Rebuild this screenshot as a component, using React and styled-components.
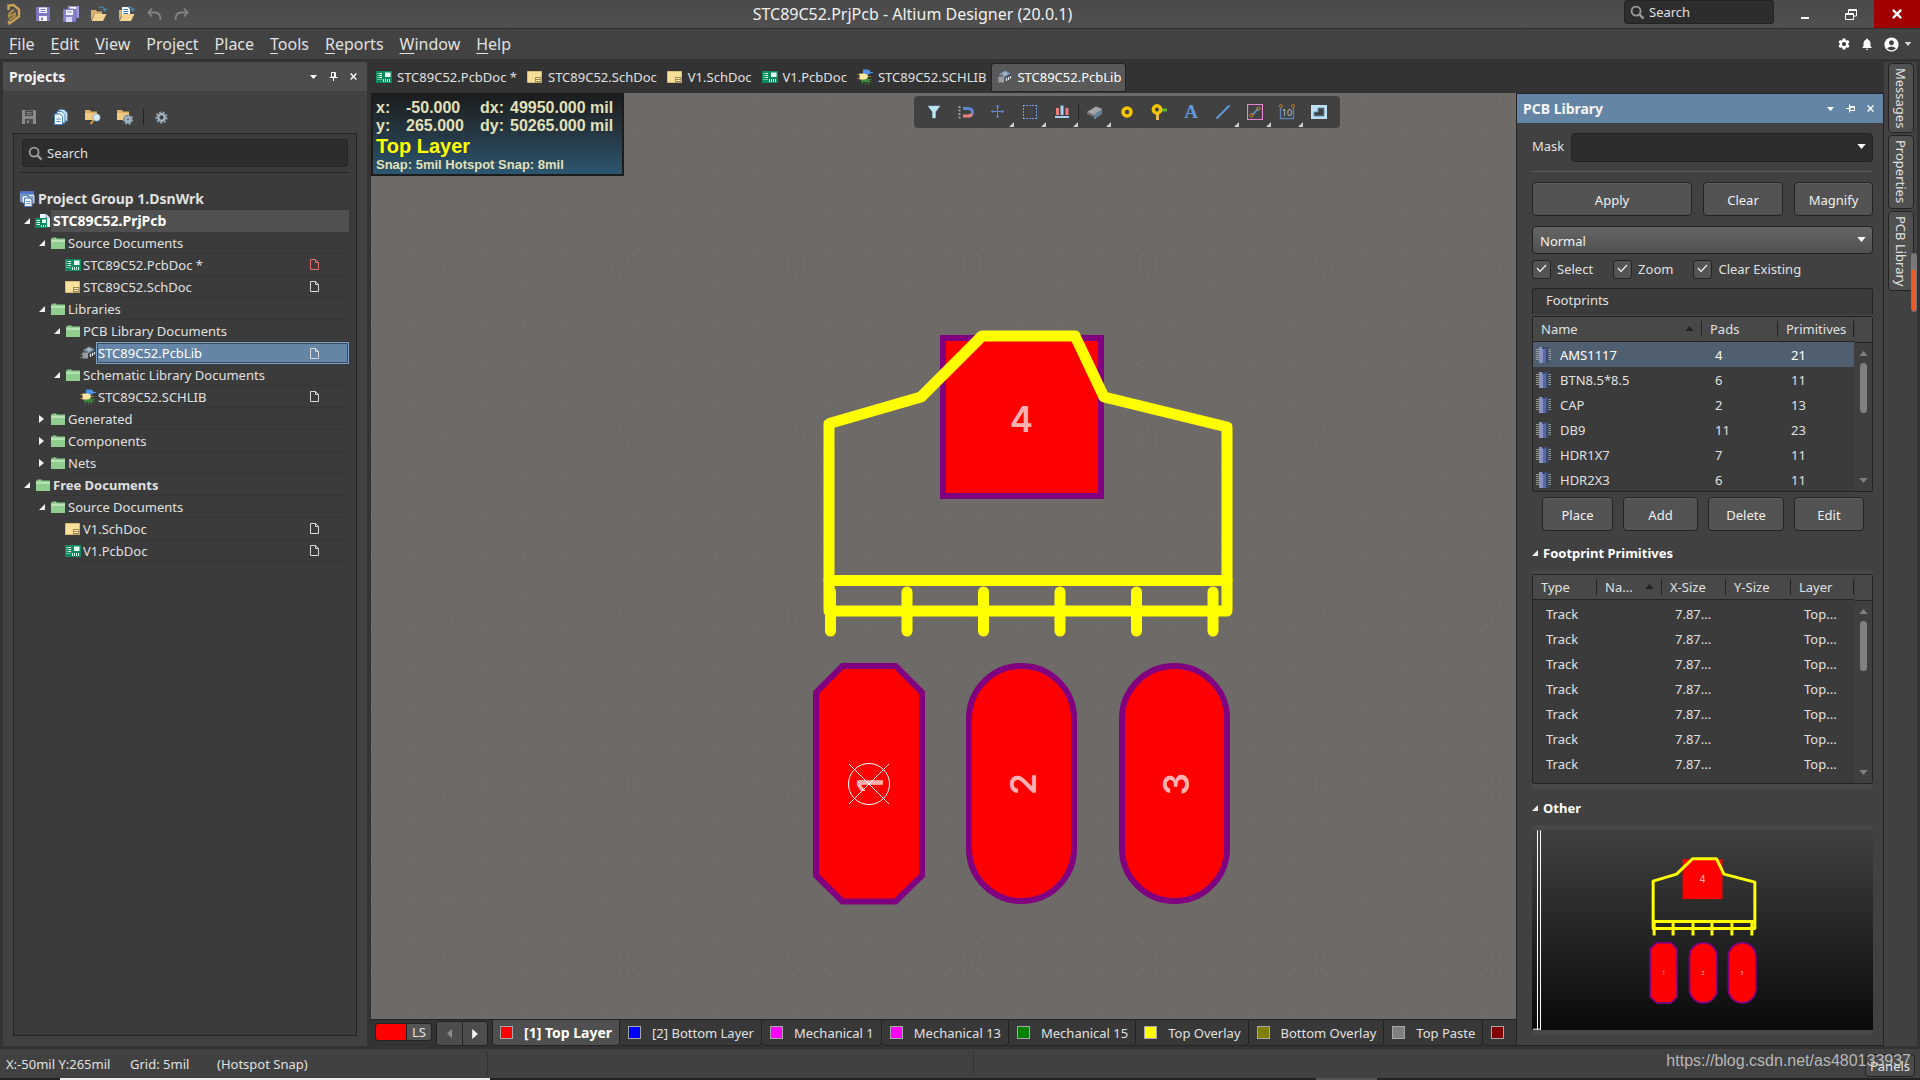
import React from 'react';
import styled, { createGlobalStyle, css } from 'styled-components';
import { MdSettings, MdNotifications, MdAccountCircle } from 'react-icons/md';

const GlobalStyle = createGlobalStyle`
  * {
    box-sizing: border-box;
  }

  body {
    margin: 0;
    background: #333333;
    color: #e0e0e0;
    font-family: "Noto Sans", "Open Sans", sans-serif;
    font-size: 13px;
    line-height: 18px;
    overflow: hidden;
  }

  button, input, select {
    margin: 0;
    padding: 0;
    border: none;
    background: none;
    color: inherit;
    font: inherit;
  }

  svg {
    display: block;
    flex: none;
  }
`;

const Window = styled.div`
  display: flex;
  flex-direction: column;
  height: 100vh;
`;

/* ---------- title bar ---------- */

const TitleBar = styled.header`
  display: grid;
  grid-template-columns: 1fr auto 1fr;
  height: 29px;
  background: linear-gradient(#4a4a4a, #505050);
  border-bottom: 1px solid #303030;
`;

const QuickAccess = styled.div`
  display: flex;
  align-items: center;
  padding-left: 5px;
  gap: 12px;
`;

const IconButton = styled.button`
  display: flex;
  align-items: center;
  justify-content: center;
`;

const Title = styled.h1`
  margin: 0;
  padding-right: 95px;
  font-size: 16px;
  font-weight: 400;
  line-height: 28px;
  color: #f0f0f0;
`;

const TitleRight = styled.div`
  display: flex;
  justify-content: flex-end;
`;

const SearchLabel = styled.label`
  display: flex;
  align-items: center;
  gap: 4px;
  width: ${(p) => p.$width || 'auto'};
  height: ${(p) => p.$height};
  margin-right: ${(p) => (p.$width ? 8 : 0)}px;
  padding-left: 5px;
  background: #2d2d2d;
  border: 1px solid #232323;
  border-radius: 3px;

  input {
    flex: 1;
    min-width: 0;
    outline: none;
  }

  input::placeholder {
    color: #e0e0e0;
    opacity: 1;
  }
`;

const WindowButton = styled.button`
  display: flex;
  align-items: center;
  justify-content: center;
  width: 46px;
  height: 28px;
  background: ${(p) => (p.$close ? '#a10000' : 'transparent')};
`;

/* ---------- menu ---------- */

const MenuBar = styled.nav`
  display: flex;
  align-items: center;
  height: 30px;
  padding: 0 8px 0 9px;
  gap: 16px;
  background: #424242;
  font-size: 16px;
  line-height: 22px;
`;

const MenuButton = styled.button`
  u {
    text-decoration-thickness: 1px;
    text-underline-offset: 3px;
  }
`;

const MenuIcons = styled.div`
  display: flex;
  align-items: center;
  gap: 9px;
  margin-left: auto;
  color: #ffffff;
`;

const AccountButton = styled(IconButton)`
  gap: 4px;
`;

/* ---------- main layout ---------- */

const Main = styled.main`
  display: flex;
  flex: 1;
  min-height: 0;
  padding: 3px;
`;

const Panel = styled.section`
  display: flex;
  flex-direction: column;
  flex: none;
  width: ${(p) => p.$width};
  background: #414141;
`;

const PanelHeader = styled.div`
  display: flex;
  align-items: center;
  gap: 12px;
  flex: none;
  height: 29px;
  padding: 0 ${(p) => (p.$active ? 9 : 10)}px 0 6px;
  background: ${(p) => (p.$active ? '#6485a5' : '#4d4d4d')};
  color: #ffffff;

  h2 {
    flex: 1;
    margin: 0;
    font-size: 14px;
    line-height: 20px;
    font-weight: 700;
    color: #f4f4f4;
  }
`;

const PanelTools = styled.div`
  display: flex;
  align-items: center;
  gap: 16px;
  height: 42px;
  padding: 10px 0 0 18px;
`;

const ToolSeparator = styled.div`
  width: 1px;
  height: 16px;
  margin: 0 ${(p) => p.$inset || 0}px;
  background: #222222;
`;

const TreeBox = styled.div`
  flex: 1;
  margin: 0 10px 10px;
  padding: 5px 7px 0 6px;
  background: #3b3b3b;
  border: 1px solid #232323;
`;

const TreeSearch = styled.div`
  padding: 0 1px 5px 2px;
  margin-bottom: 15px;
  border-bottom: 1px solid #272727;
`;

const Tree = styled.ul`
  margin: 0;
  padding: 0;
  list-style: none;
`;

const TreeRow = styled.li`
  display: flex;
  align-items: center;
  height: 22px;
  padding-left: ${(p) => p.$depth * 15}px;
  font-size: ${(p) => (p.$project ? 14 : 13)}px;
  font-weight: ${(p) => (p.$bold ? 700 : 400)};
  line-height: 20px;
`;

const TreeArrow = styled.span`
  display: flex;
  justify-content: center;
  width: 15px;
  padding-right: 2px;
`;

const TreeIcon = styled.span`
  display: flex;
  width: 16px;
`;

const TreeLabel = styled.span`
  display: flex;
  align-items: center;
  justify-content: space-between;
  flex: 1;
  height: 22px;
  padding: 0 30px 0 2px;
  border-bottom: 1px solid #353535;
  white-space: nowrap;

  ${(p) => p.$project && css`
    background: #505050;
    border-bottom-color: #505050;
    color: #ffffff;
  `}

  ${(p) => p.$selected && css`
    padding-left: 1px;
    padding-right: 29px;
    background: #6485a5;
    border: 1px solid #7fa1c4;
    box-shadow: inset 0 0 0 1px #3b4b5b;
    color: #ffffff;
  `}
`;

const Workspace = styled.div`
  display: flex;
  flex-direction: column;
  flex: 1;
  min-width: 0;
  margin-left: 4px;
`;

const DocumentTabs = styled.div`
  display: flex;
  align-items: flex-end;
  flex: none;
  height: 31px;
  padding-bottom: 1px;
`;

const DocumentTab = styled.button`
  display: flex;
  align-items: center;
  gap: 5px;
  height: 29px;
  padding: 0 4px 2px;
  border: 1px solid transparent;
  border-radius: 3px 3px 0 0;
  white-space: nowrap;

  ${(p) => p.$active && css`
    background: #595959;
    border-color: #242424;
    color: #ffffff;
  `}
`;

const WorkArea = styled.div`
  display: flex;
  flex: 1;
  min-height: 0;
`;

const EditorColumn = styled.div`
  display: flex;
  flex-direction: column;
  flex: 1;
  min-width: 0;
`;

const Editor = styled.div`
  position: relative;
  flex: 1;
  min-height: 0;
  background: #6e6a68;

  > svg {
    width: 100%;
    height: 100%;
  }
`;

const HeadsUp = styled.div`
  position: absolute;
  top: 0;
  left: 0;
  width: 253px;
  padding: 6px 3px 1px;
  border: 2px solid #1c1c1c;
  border-top: none;
  background: linear-gradient(#1b1b1b, #24343e 45%, #2c5670);
  color: #e2e0b8;
  font: bold 13px/16px "Liberation Sans", Arial, sans-serif;
`;

const Coordinates = styled.div`
  display: grid;
  grid-template-columns: 30px 74px 30px 1fr;
  font-size: 16px;
  line-height: 18px;
`;

const ActiveLayer = styled.div`
  color: #ffff00;
  font-size: 20px;
  line-height: 22px;
`;

const ActiveBar = styled.div`
  position: absolute;
  top: 3px;
  right: 176px;
  display: flex;
  align-items: center;
  height: 32px;
  padding: 0 5px 0 4px;
  background: #414141;
  border-radius: 4px;
`;

const ActiveBarButton = styled.button`
  position: relative;
  display: flex;
  align-items: center;
  justify-content: center;
  width: 32px;
  height: 32px;

  ${(p) => p.$menu && css`
    &::after {
      content: '';
      position: absolute;
      right: 0;
      bottom: 1px;
      border-left: 5px solid transparent;
      border-bottom: 5px solid #d0d0d0;
    }
  `}
`;

const LayerBar = styled.div`
  display: flex;
  align-items: stretch;
  flex: none;
  height: 27px;
  padding-left: 4px;
  border-top: 1px solid #232323;
  overflow: hidden;
`;

const LayerSet = styled.button`
  display: flex;
  align-items: center;
  flex: none;
  width: 57px;
  height: 18px;
  margin: 3px 4px 0 0;
  border: 1px solid #232323;
  border-radius: 3px;
  background: linear-gradient(90deg, #ff0000 30px, #232323 30px, #232323 31px, #555555 31px);
  padding-left: 36px;
`;

const LayerArrows = styled.div`
  display: flex;
  flex: none;
  width: 52px;
  margin: 1px 4px 0 0;
  border: 1px solid #232323;
  border-radius: 3px;
  background: #4d4d4d;

  button {
    display: flex;
    align-items: center;
    justify-content: center;
    flex: 1;
  }

  button + button {
    border-left: 1px solid #232323;
  }
`;

const LayerTab = styled.button`
  display: flex;
  align-items: center;
  gap: 11px;
  flex: none;
  padding: 0 7px;
  border: 1px solid #232323;
  border-top: none;
  border-left-color: ${(p) => (p.$active ? '#232323' : 'transparent')};
  border-radius: 0 0 4px 4px;
  background: ${(p) => (p.$active ? '#4f4f4f' : '#383838')};
  color: ${(p) => (p.$active ? '#ffffff' : '#e0e0e0')};
  font-size: ${(p) => (p.$active ? 14 : 13)}px;
  font-weight: ${(p) => (p.$active ? 700 : 400)};
`;

const Swatch = styled.span`
  width: 13px;
  height: 13px;
  border: 1px solid #a8a8a8;
  background: ${(p) => p.$color};
`;

/* ---------- library panel ---------- */

const LibraryPanel = styled(Panel)`
  border: 1px solid #232323;
`;

const LibraryBody = styled.div`
  display: flex;
  flex-direction: column;
  flex: 1;
  min-height: 0;
  padding: 10px 10px 9px 15px;
`;

const MaskRow = styled.div`
  display: flex;
  align-items: center;
  gap: 7px;
  padding-bottom: 9px;
  margin-bottom: 10px;
  border-bottom: 1px solid #5a5a5a;

  label {
    padding-bottom: 3px;
  }
`;

const SelectWrap = styled.div`
  position: relative;
  flex: 1;

  select {
    display: block;
    width: 100%;
    height: ${(p) => (p.$dark ? 29 : 28)}px;
    padding: 2px 0 0 7px;
    appearance: none;
    border: 1px solid #232323;
    border-radius: 4px;
    background: ${(p) => (p.$dark ? '#2d2d2d' : 'linear-gradient(#666666, #505050)')};
    color: #f0f0f0;
    outline: none;
  }

  svg {
    position: absolute;
    right: 7px;
    top: 11px;
    pointer-events: none;
  }
`;

const ButtonRow = styled.div`
  display: grid;
  grid-template-columns: ${(p) => p.$columns};
  gap: ${(p) => p.$gap}px;
  padding: ${(p) => p.$padding};
`;

const Button = styled.button`
  height: 34px;
  padding-top: 1px;
  border: 1px solid #232323;
  border-radius: 4px;
  background: #535353;
  box-shadow: inset 0 1px 0 #606060;
  color: #f0f0f0;
`;

const CheckRow = styled.div`
  display: flex;
  gap: 20px;
  margin: 5px 0 9px;
`;

const CheckLabel = styled.label`
  position: relative;
  display: flex;
  align-items: center;
  gap: 6px;
  height: 20px;

  input {
    width: 19px;
    height: 19px;
    appearance: none;
    border: 1px solid #232323;
    border-radius: 3px;
    background: #535353;
  }

  svg {
    position: absolute;
    left: 4px;
    top: 5px;
    pointer-events: none;
  }
`;

const GroupTitle = styled.div`
  height: 26px;
  padding: 2px 13px;
  border: 1px solid #232323;
  border-bottom: none;
  border-radius: 3px 3px 0 0;
  background: #3b3b3b;
`;

const GridFrame = styled.div`
  display: flex;
  height: ${(p) => p.$height};
  margin-top: 2px;
  border: 1px solid #232323;
  border-radius: 2px;
  background: #3b3b3b;
  overflow: hidden;
`;

const Grid = styled.table`
  flex: 1;
  table-layout: fixed;
  border-collapse: separate;
  border-spacing: 0;
  width: 100%;
  align-self: flex-start;

  th {
    position: relative;
    height: 25px;
    padding: 0 0 0 8px;
    background: #484848;
    border-bottom: 1px solid #232323;
    font-weight: 400;
    text-align: left;
  }

  th::after {
    content: '';
    position: absolute;
    top: 4px;
    right: 0;
    width: 1px;
    height: 16px;
    background: #232323;
  }

  th svg {
    position: absolute;
    right: 8px;
    top: 9px;
  }

  td {
    height: 25px;
    padding: 0 0 0 13px;
    white-space: nowrap;
  }

  ${(p) => p.$spaced && css`
    tbody::before {
      content: '';
      display: block;
      height: 1px;
    }
  `}
`;

const GridRow = styled.tr`
  background: ${(p) => (p.$selected ? '#505f70' : 'transparent')};
  color: ${(p) => (p.$selected ? '#ffffff' : '#e0e0e0')};
`;

const NameCell = styled.span`
  display: flex;
  align-items: center;
  gap: 8px;
  margin-left: -10px;
`;

const ScrollBar = styled.div`
  display: flex;
  flex-direction: column;
  align-items: center;
  flex: none;
  width: 18px;
  padding-bottom: 8px;
  border-left: 1px solid #3f3f3f;
  background: #3f3f3f;

  &::before {
    content: '';
    align-self: stretch;
    flex: none;
    height: 25px;
    margin-bottom: 8px;
    background: #484848;
    border-bottom: 1px solid #232323;
  }

  svg:last-child {
    margin-top: auto;
  }
`;

const ScrollThumb = styled.div`
  width: 7px;
  height: 50px;
  margin-top: 7px;
  border-radius: 4px;
  background: #808080;
`;

const SectionTitle = styled.h3`
  display: flex;
  align-items: center;
  gap: 5px;
  margin: ${(p) => p.$margin};
  color: #ffffff;
  font-size: 13px;
  line-height: 18px;
  font-weight: 700;
`;

const Frame = styled.div`
  padding: ${(p) => p.$padding};
  border-radius: 3px;
  background: #484848;
`;

const Preview = styled.div`
  height: 200px;
  background: linear-gradient(#404040, #0a0a0a);

  svg {
    width: 100%;
    height: 100%;
  }
`;

/* ---------- right rail and status bar ---------- */

const Rail = styled.aside`
  position: relative;
  display: flex;
  flex-direction: column;
  align-items: flex-start;
  gap: 2px;
  flex: none;
  width: 33px;
  padding: 1px 4px;
  background: #414141;
`;

const RailButton = styled.button`
  width: 26px;
  padding: 4px 0;
  border: 1px solid #232323;
  border-radius: 4px;
  background: #505050;
  writing-mode: vertical-rl;
  line-height: 24px;
  white-space: nowrap;
`;

const RailMarker = styled.div`
  position: absolute;
  right: 0;
  top: 191px;
  width: 6px;
  height: 59px;
  border: 1px solid #7a7a7a;
  border-radius: 3px;
  background: linear-gradient(#7a7a7a 16px, #f15a24 16px);
`;

const StatusBar = styled.footer`
  position: relative;
  display: flex;
  align-items: center;
  flex: none;
  height: 29px;
  padding: 0 5px 0 6px;
  background: #414141;
`;

const StatusGroup = styled.div`
  display: flex;
  align-items: center;
  width: ${(p) => p.$width};
  height: 23px;
  border-right: 1px solid #333333;
`;

const StatusText = styled.span`
  width: ${(p) => p.$width};
  white-space: nowrap;
`;

const PanelsButton = styled.button`
  width: 50px;
  height: 23px;
  margin: 4px 0 0 auto;
  border: 1px solid #232323;
  border-radius: 4px;
  background: #4b4b4b;
`;

const Watermark = styled.div`
  position: absolute;
  right: 9px;
  bottom: 6px;
  color: rgba(215, 215, 215, 0.8);
  font: 16px/22px "Liberation Sans", Arial, sans-serif;
  pointer-events: none;
`;

const TaskStrip = styled.div`
  flex: none;
  height: 2px;
  background: linear-gradient(90deg, #222222 60px, #f0f0f0 60px, #f0f0f0 490px, #222222 490px, #222222 1316px, #555555 1316px, #555555 1377px, #222222 1377px);
`;

/* ---------- icons ---------- */

const Icon = ({ size = 16, width, height, box = '0 0 16 16', children }) => (
  <svg width={width || size} height={height || size} viewBox={box} fill="none" aria-hidden="true">{children}</svg>
);

const LogoIcon = () => (
  <Icon width={18} height={22} box="0 0 18 22">
    <path d="M3.500 7V2.500L8.500 2L14 6.500V13.500L4.500 20.500L3.500 18" stroke="#c9a255" strokeWidth="2.400" />
    <path d="M9 6.500L4 11V13.500L10 10.500V13L4 17" stroke="#b8924a" strokeWidth="1.800" />
  </Icon>
);

const SaveIcon = ({ body = '#7d78c0', light = '#f4f4ff' }) => (
  <Icon>
    <path d="M1 1H14L15 2V15H1Z" fill={body} />
    <path d="M4 1.500H12V7H4Z" fill={light} />
    <path d="M5.500 3.500H10.500M5.500 5.500H10.500" stroke={body} />
    <path d="M4 10H12V15H4Z" fill={light} />
    <path d="M6 11.500H8V14H6Z" fill={body} />
  </Icon>
);

const SaveAllIcon = () => (
  <Icon>
    <path d="M5 0H16V12H5Z" fill="#9c97d6" />
    <path d="M7 1H13V3H7Z" fill="#ffffff" />
    <path d="M0 3H11L13 4V16H0Z" fill="#8883cb" stroke="#5d58a3" strokeWidth="0.600" />
    <path d="M3 4H10V9H3Z" fill="#f4f4ff" />
    <path d="M4 6H9" stroke="#8883cb" />
    <path d="M3 11H9V16H3Z" fill="#d9d7f5" />
  </Icon>
);

const OpenIcon = ({ doc }) => (
  <Icon>
    <path d="M8 2C11 0 13 1 14 4M12 3L14 5L15.500 2.500" stroke="#4b84a8" strokeWidth="1.300" />
    <path d="M0 4H5L6 5.500H11V8H4L0 14Z" fill="#d8b070" />
    {doc && <path d="M3 1H9L11 3V10H3Z" fill="#eef4fa" />}
    {doc && <path d="M4.500 3.500H9M4.500 5.500H9M4.500 7.500H9" stroke="#3f7da8" />}
    <path d="M4 8H15.500L12 15H0.500Z" fill="#f5d391" />
  </Icon>
);

const ArrowBackIcon = ({ flip }) => (
  <Icon width={15} height={13} box="0 0 15 13">
    <g transform={flip ? 'translate(15 0) scale(-1 1)' : undefined} stroke="#828282" strokeWidth="1.800">
      <path d="M2 4.500H8C12 4.500 13.500 8 13.500 12" />
      <path d="M5 0.500L1.500 4.500L5 8.500" />
    </g>
  </Icon>
);

const SearchIcon = () => (
  <Icon size={15}>
    <circle cx="6.500" cy="6.500" r="4.800" stroke="#999999" strokeWidth="2" />
    <path d="M10 10L14.500 14.500" stroke="#999999" strokeWidth="2.600" />
  </Icon>
);

const CaretIcon = ({ width = 9, height = 5, color = '#ffffff' }) => (
  <Icon width={width} height={height} box="0 0 10 6"><path d="M0 0H10L5 6Z" fill={color} /></Icon>
);

const CaretUpIcon = ({ color = '#808080' }) => (
  <Icon width={9} height={5} box="0 0 10 6"><path d="M0 6H10L5 0Z" fill={color} /></Icon>
);

const PinIcon = ({ side }) => (
  <Icon width={9} height={9} box="0 0 9 9">
    <g transform={side ? 'rotate(-90 4.500 4.500) scale(1 -1) translate(0 -9)' : undefined}>
      <path d="M2.500 0.500H6.500V5H2.500Z" stroke="#ffffff" />
      <path d="M5.500 0V5M0.500 5.500H8.500M4.500 6V9" stroke="#ffffff" />
    </g>
  </Icon>
);

const CloseIcon = ({ size = 7, stroke = 1.6 }) => (
  <Icon size={size} box="0 0 8 8"><path d="M0.700 0.700L7.300 7.300M7.300 0.700L0.700 7.300" stroke="#ffffff" strokeWidth={stroke} /></Icon>
);

const ExpandedIcon = () => (
  <Icon size={6} box="0 0 6 6"><path d="M6 0V6H0Z" fill="#f0f0f0" /></Icon>
);

const CollapsedIcon = () => (
  <Icon width={5} height={8} box="0 0 5 8"><path d="M0 0L5 4L0 8Z" fill="#f0f0f0" /></Icon>
);

const FolderIcon = () => (
  <Icon width={15} height={12} box="-1 0 15 12">
    <path d="M0 1.500H1.500V0.500H5.500V1.500H14V12H0Z" fill="#8fce8f" />
    <path d="M0 3H14V5H0Z" fill="#b7e2b4" />
  </Icon>
);

const PcbDocIcon = () => (
  <Icon height={12} width={16} box="0 0 16 12">
    <path d="M0 0H16V12H0Z" fill="#0f8a5c" />
    <path d="M1.500 2.500H6M1.500 4.500H6M1.500 6.500H6M1.500 8.500H6" stroke="#c8f0de" strokeDasharray="1 1" />
    <path d="M3.500 2.500H6M3.500 4.500H6M3.500 6.500H6" stroke="#e8fff4" />
    <path d="M9 1.500H14.500V6H9Z" fill="#e4fff2" />
    <path d="M7.500 8V11M9.500 8V11M11.500 8V11M13.500 8V11" stroke="#c8f0de" />
  </Icon>
);

const SchDocIcon = () => (
  <Icon height={12} width={16} box="0 0 16 12">
    <path d="M0.500 0.500H14.500V11.500H0.500Z" fill="#f8e09a" stroke="#d8bb74" />
    <path d="M8 6H14.500V11.500H8Z" fill="#a08a52" />
    <path d="M9 7.500H13.500M9 9.500H13.500" stroke="#fbe9b4" />
  </Icon>
);

const PcbLibIcon = () => (
  <Icon>
    <path d="M3 5L9 1.500L15 4.500L9 8.500Z" fill="#7a90a8" />
    <path d="M6 4.500L9 3L12 4.500L9 6.500Z" fill="#a9bccd" />
    <path d="M9 8.500L15 4.500V7L9 11Z" fill="#3d4c5c" />
    <path d="M10.500 9V12M12.500 8V11M14.500 7V9.500" stroke="#e4e9ee" strokeWidth="1.200" />
    <path d="M2.500 7.500H8V13.500H2.500Z" fill="#9a9fa5" />
    <path d="M0.500 9.500H3M0 12.500H3M4 6V8M6 5.500V8" stroke="#6d7277" />
  </Icon>
);

const SchLibIcon = () => (
  <Icon>
    <path d="M6 0.500H10C12.500 0.500 13.500 2 13.500 3H16V4H13.500C12.500 5.500 11 6 9 6H6Z" fill="#4f90e8" />
    <path d="M4 9.500H12.500V13H4Z" fill="#388a3a" />
    <path d="M5.500 13V15.500M8.500 13V15.500M11.500 13V15.500M12 10.500H14.500M12 12.500H14.500" stroke="#388a3a" strokeWidth="0.800" />
    <path d="M0 5.500H3M0 9.500H3M11 7.500H14" stroke="#a8762a" strokeWidth="0.900" />
    <path d="M2.500 4.500H7C9.500 4.500 11 6 11 7.500C11 9 9.500 10.500 7 10.500H2.500Z" fill="#ffe7a0" />
  </Icon>
);

const GroupIcon = () => (
  <Icon>
    <path d="M0 0.500H14V11H0Z" fill="#7f9fd0" />
    <path d="M0 0.500H14V3H0Z" fill="#4d78c8" />
    <path d="M2 4.500H8V12H2Z" fill="#e8eef8" stroke="#5577a8" />
    <path d="M4.500 7H10L12 9V15.500H4.500Z" fill="#e8eef8" stroke="#5577a8" />
    <path d="M9 4.500H14V12H12.500" stroke="#dfe7f4" />
    <path d="M6 10.500H10.500M6 12.500H10.500" stroke="#7b9ac5" />
  </Icon>
);

const ProjectIcon = () => (
  <Icon>
    <path d="M5 1H11L15 4.500V14H5Z" fill="#eef2fb" />
    <path d="M11 1V4.500H15" stroke="#9aa5c5" />
    <path d="M0 5H12V15H0Z" fill="#0f8a5c" />
    <path d="M1.500 7.500H5M1.500 9.500H5M1.500 11.500H5" stroke="#e0fff0" />
    <path d="M7 6.500H11V10H7Z" fill="#e4fff2" />
    <path d="M6.500 12V14M8.500 12V14M10.500 12V14" stroke="#c8f0de" />
  </Icon>
);

const PageIcon = ({ modified }) => (
  <Icon width={9} height={11} box="0 0 9 11">
    <path d="M0.500 0.500H5.500L8.500 3.500V10.500H0.500ZM5.500 0.500V3.500H8.500" stroke={modified ? '#e86a6a' : '#d8d8d8'} />
  </Icon>
);

const CopyDocsIcon = () => (
  <Icon>
    <path d="M6 0.500H11L14.500 4V12H6Z" fill="#cfe2f5" stroke="#4c86c0" />
    <path d="M4 2.500H9L12 5.500V14H4Z" fill="#dcebf9" stroke="#4c86c0" />
    <path d="M1.500 5H7L9.500 7.500V15.500H1.500Z" fill="#f4f9ff" stroke="#4c86c0" />
    <path d="M3.500 10H7.500M3.500 12.500H7.500" stroke="#4c86c0" />
  </Icon>
);

const GearShape = ({ x = 8, y = 8, r = 4.5 }) => (
  <g>
    <circle cx={x} cy={y} r={r + 1} stroke="#8fa3b2" strokeWidth="2" strokeDasharray="2.200 1.600" />
    <circle cx={x} cy={y} r={r - 1} stroke="#a5b6c2" strokeWidth="2.400" />
  </g>
);

const FolderToolIcon = ({ kind }) => (
  <Icon>
    <path d="M0 1H5L6 2.500H12V11H0Z" fill="#dcae66" />
    <path d="M0 4H12V11H0Z" fill="#f2c983" />
    {kind === 'search' ? (
      <g>
        <circle cx="11.500" cy="8.500" r="3.600" fill="#d7ecf7" stroke="#8fb4c9" />
        <path d="M8.500 11.500L5.500 15" stroke="#c99a4a" strokeWidth="2" />
      </g>
    ) : (
      <g><circle cx="11" cy="10.500" r="4.500" fill="#50606c" /><GearShape x={11} y={10.5} r={3.3} /></g>
    )}
  </Icon>
);

const FootprintIcon = () => (
  <Icon>
    <path d="M0 2.500H15M0 4.500H15M0 6.500H15M0 8.500H15M0 10.500H15M0 12.500H15" stroke="#a9b0a8" strokeWidth="0.800" />
    <path d="M3 0H12V16H3Z" fill="#5a6a9c" />
    <path d="M3 0H7V16H3Z" fill="#8a8fc4" />
    <path d="M10 0H12.500V16H10Z" fill="#384a72" />
    <path d="M6 0H9.500C9.500 2.500 6 2.500 6 0Z" fill="#2e3d60" />
  </Icon>
);

const tools = [
  { name: 'Filter', icon: <path d="M2 2H14L9.500 8V14H6.500V8Z" fill="#bfe6f2" stroke="#8cc3d8" strokeWidth="0.600" /> },
  {
    name: 'Snapping',
    icon: (
      <g>
        <path d="M1.500 2V15" stroke="#9aa0a4" strokeWidth="2" strokeDasharray="2 1.500" />
        <path d="M5 4.500H10C16 4.500 16 12 10 12" stroke="#5d86d8" strokeWidth="3" />
        <path d="M5 12H10C11.500 12 13 11.500 13.700 10" stroke="#ee7d7d" strokeWidth="3" />
      </g>
    ),
  },
  { name: 'Move', menu: true, icon: <path d="M7.500 2V13M2 7.500H13M7.500 1L6.500 3H8.500ZM7.500 14L6.500 12H8.500ZM1 7.500L3 6.500V8.500ZM14 7.500L12 6.500V8.500Z" stroke="#6486c4" /> },
  { name: 'Select area', menu: true, icon: <path d="M1 1.500H15M1 14.500H15M1.500 1V15M14.500 1V15" stroke="#6f97e8" strokeDasharray="2 1" /> },
  {
    name: 'Align',
    menu: true,
    icon: (
      <g>
        <path d="M2 4H5V11H2ZM11.500 4H14.500V11H11.500Z" fill="#ee7d7d" />
        <path d="M6.500 1.500H9.500V11H6.500Z" fill="#a9cfee" />
        <path d="M1 13H15" stroke="#a9cfee" strokeWidth="2" />
      </g>
    ),
  },
  {
    name: 'Place component',
    menu: true,
    icon: (
      <g>
        <path d="M0 8L9 2.500L15.500 5L7 11Z" fill="#a5a5a5" />
        <path d="M0 8L7 11V13L0 10Z" fill="#777777" />
        <path d="M8 10V15M10 9V13.500M12 7.500V12M14 6V10.500" stroke="#7fa7c4" strokeWidth="1.300" />
      </g>
    ),
  },
  { name: 'Place pad', icon: <circle cx="8" cy="8" r="4" stroke="#f4c400" strokeWidth="3.600" /> },
  {
    name: 'Place via',
    icon: (
      <g>
        <path d="M6.500 9V16" stroke="#e8b85a" strokeWidth="3" />
        <path d="M10 6H16" stroke="#5cb82e" strokeWidth="3" />
        <circle cx="6" cy="5.500" r="3.700" stroke="#f4c400" strokeWidth="3.400" />
      </g>
    ),
  },
  { name: 'Place string', glyph: true },
  { name: 'Place line', menu: true, icon: <path d="M1.500 14.500L14.500 1.500" stroke="#5f98dc" strokeWidth="2" /> },
  {
    name: 'Place room',
    menu: true,
    icon: (
      <g>
        <path d="M0.500 0.500H15.500V15.500H0.500Z" stroke="#e584d6" strokeWidth="1.200" />
        <path d="M5 11L11 5" stroke="#5f86b8" strokeWidth="2" />
        <circle cx="4.500" cy="11.500" r="1.600" stroke="#c88a28" />
        <circle cx="11.500" cy="4.500" r="1.600" stroke="#c88a28" />
      </g>
    ),
  },
  {
    name: 'Place dimension',
    menu: true,
    icon: (
      <g>
        <path d="M1.500 4V14.500H14.500V4" stroke="#5f7fb0" strokeWidth="1.400" />
        <circle cx="2" cy="2" r="1.500" stroke="#b07a28" />
        <circle cx="14" cy="2" r="1.500" stroke="#b07a28" />
        <text x="8" y="12" textAnchor="middle" fontSize="9" fill="#c0c0c0">10</text>
      </g>
    ),
  },
  {
    name: 'Place region',
    icon: (
      <g>
        <path d="M0 1H16V15H0Z" fill="#bfe0f2" />
        <path d="M7 4H13V12H3V8H7Z" fill="#414141" stroke="#5a94b8" />
      </g>
    ),
  },
];

const BigA = styled.span`
  color: #5f98dc;
  font: bold 19px/20px "Liberation Serif", "Times New Roman", serif;
`;

/* ---------- drawings ---------- */

const BoardDrawing = () => (
  <svg viewBox="371 93 1145 926" preserveAspectRatio="xMidYMid slice" role="img" aria-label="AMS1117 footprint">
    <defs>
      <pattern id="minor" x="830" y="363" width="7.650" height="7.650" patternUnits="userSpaceOnUse">
        <rect width="1" height="1" fill="#656260" />
      </pattern>
      <pattern id="major" x="830" y="363" width="38.250" height="38.250" patternUnits="userSpaceOnUse">
        <rect width="1" height="1" fill="#8b8785" />
      </pattern>
    </defs>
    <rect x="0" y="0" width="1920" height="1080" fill="url(#minor)" />
    <rect x="0" y="0" width="1920" height="1080" fill="url(#major)" />
    <g fill="#ff0000" stroke="#800080" strokeWidth="6">
      <rect x="943" y="338" width="158" height="158" />
      <path d="M842.500 666H895.500L922 692.500V875.500L895.500 901.500H842.500L816 875.500V692.500Z" />
      <rect x="969" y="666" width="105" height="235" rx="52.500" />
      <rect x="1122" y="666" width="105" height="235" rx="52.500" />
    </g>
    <g stroke="#ffff00" strokeWidth="11" strokeLinecap="round" strokeLinejoin="round" fill="none">
      <path d="M829 611V424L831 423L921 397L982 336H1075L1104 397L1227 427V611Z" />
      <path d="M829 580.500H1227" />
      <path d="M830.500 592V631M907 592V631M983.500 592V631M1060 592V631M1136.500 592V631M1213 592V631" />
    </g>
    <g fill="#ffb0b0" fontFamily="Inter" fontWeight="600" fontSize="35" textAnchor="middle">
      <text x="1021.500" y="432">4</text>
      <text transform="translate(882.500 785) rotate(-90)">1</text>
      <text transform="translate(1035.500 784) rotate(-90)">2</text>
      <text transform="translate(1188.500 784) rotate(-90)">3</text>
    </g>
    <g stroke="#ffffff" fill="none">
      <circle cx="869" cy="784" r="20.500" />
      <path d="M849 764L889 804M889 764L849 804" />
    </g>
  </svg>
);

const PreviewDrawing = () => (
  <svg viewBox="1532 830 342 200" role="img" aria-label="Footprint preview">
    <path d="M1537.500 830V1030M1540.500 830V1030M1533 1029.500H1541" stroke="#ffffff" />
    <rect x="1683" y="859" width="40" height="40" fill="#ff0000" />
    <g fill="#ff0000" stroke="#800080" strokeWidth="1.800">
      <path d="M1657 943H1671.500L1677.500 949V997L1671.500 1003H1657L1650.500 997V949Z" />
      <rect x="1690" y="943" width="27.500" height="60" rx="13.700" />
      <rect x="1729" y="943" width="27.500" height="60" rx="13.700" />
    </g>
    <g stroke="#ffff00" strokeWidth="3" strokeLinejoin="round" fill="none">
      <path d="M1653.500 928.500V881L1677 874L1693 858.500H1717L1724.500 874L1755.500 882V928.500ZM1653.500 921.500H1755.500" />
      <path d="M1654.500 923V935.500M1673.500 923V935.500M1693.500 923V935.500M1712.500 923V935.500M1732.500 923V935.500M1752.500 923V935.500" />
    </g>
    <g fill="#ffb0b0" fontFamily="Inter" textAnchor="middle" fontSize="5">
      <text x="1703" y="882.500" fontSize="10">4</text>
      <text x="1664" y="975">1</text>
      <text x="1703.500" y="975">2</text>
      <text x="1742.500" y="975">3</text>
    </g>
  </svg>
);

/* ---------- data ---------- */

const menus = [
  ['', 'F', 'ile'], ['', 'E', 'dit'], ['', 'V', 'iew'], ['Proje', 'c', 't'], ['', 'P', 'lace'],
  ['', 'T', 'ools'], ['', 'R', 'eports'], ['', 'W', 'indow'], ['', 'H', 'elp'],
];

const treeRows = [
  { depth: 0, label: 'STC89C52.PrjPcb', icon: <ProjectIcon />, open: true, bold: true, project: true },
  { depth: 1, label: 'Source Documents', icon: <FolderIcon />, open: true },
  { depth: 2, label: 'STC89C52.PcbDoc *', icon: <PcbDocIcon />, page: true, modified: true },
  { depth: 2, label: 'STC89C52.SchDoc', icon: <SchDocIcon />, page: true },
  { depth: 1, label: 'Libraries', icon: <FolderIcon />, open: true },
  { depth: 2, label: 'PCB Library Documents', icon: <FolderIcon />, open: true },
  { depth: 3, label: 'STC89C52.PcbLib', icon: <PcbLibIcon />, page: true, selected: true },
  { depth: 2, label: 'Schematic Library Documents', icon: <FolderIcon />, open: true },
  { depth: 3, label: 'STC89C52.SCHLIB', icon: <SchLibIcon />, page: true },
  { depth: 1, label: 'Generated', icon: <FolderIcon />, open: false },
  { depth: 1, label: 'Components', icon: <FolderIcon />, open: false },
  { depth: 1, label: 'Nets', icon: <FolderIcon />, open: false },
  { depth: 0, label: 'Free Documents', icon: <FolderIcon />, open: true, bold: true },
  { depth: 1, label: 'Source Documents', icon: <FolderIcon />, open: true },
  { depth: 2, label: 'V1.SchDoc', icon: <SchDocIcon />, page: true },
  { depth: 2, label: 'V1.PcbDoc', icon: <PcbDocIcon />, page: true },
];

const documents = [
  { label: 'STC89C52.PcbDoc *', icon: <PcbDocIcon /> },
  { label: 'STC89C52.SchDoc', icon: <SchDocIcon /> },
  { label: 'V1.SchDoc', icon: <SchDocIcon /> },
  { label: 'V1.PcbDoc', icon: <PcbDocIcon /> },
  { label: 'STC89C52.SCHLIB', icon: <SchLibIcon /> },
  { label: 'STC89C52.PcbLib', icon: <PcbLibIcon />, active: true },
];

const layers = [
  { label: '[1] Top Layer', color: '#ff0000', active: true },
  { label: '[2] Bottom Layer', color: '#0000ff' },
  { label: 'Mechanical 1', color: '#ff00ff' },
  { label: 'Mechanical 13', color: '#ff00ff' },
  { label: 'Mechanical 15', color: '#008000' },
  { label: 'Top Overlay', color: '#ffff00' },
  { label: 'Bottom Overlay', color: '#808000' },
  { label: 'Top Paste', color: '#808080' },
  { label: 'Bottom Paste', color: '#800000' },
];

const footprints = [
  ['AMS1117', 4, 21],
  ['BTN8.5*8.5', 6, 11],
  ['CAP', 2, 13],
  ['DB9', 11, 23],
  ['HDR1X7', 7, 11],
  ['HDR2X3', 6, 11],
];

const tracks = [1, 2, 3, 4, 5, 6, 7];

/* ---------- parts ---------- */

const Scroller = () => (
  <ScrollBar>
    <CaretUpIcon />
    <ScrollThumb />
    <CaretIcon color="#808080" />
  </ScrollBar>
);

const ProjectsPanel = () => (
  <Panel $width="364px">
    <PanelHeader>
      <h2>Projects</h2>
      <IconButton aria-label="Menu"><CaretIcon width={7} height={6} /></IconButton>
      <IconButton aria-label="Pin"><PinIcon /></IconButton>
      <IconButton aria-label="Close"><CloseIcon /></IconButton>
    </PanelHeader>
    <PanelTools>
      <IconButton aria-label="Save"><SaveIcon body="#8a8a8a" light="#4a4a4a" /></IconButton>
      <IconButton aria-label="Compile"><CopyDocsIcon /></IconButton>
      <IconButton aria-label="Explore"><FolderToolIcon kind="search" /></IconButton>
      <IconButton aria-label="Project options"><FolderToolIcon kind="gear" /></IconButton>
      <ToolSeparator $inset={-6} />
      <IconButton aria-label="Settings"><Icon size={15}><GearShape /></Icon></IconButton>
    </PanelTools>
    <TreeBox>
      <TreeSearch>
        <SearchLabel $height="28px">
          <SearchIcon />
          <input type="text" placeholder="Search" aria-label="Search projects" />
        </SearchLabel>
      </TreeSearch>
      <Tree>
        <TreeRow $depth={0} $bold $project>
          <TreeIcon><GroupIcon /></TreeIcon>
          <TreeLabel>Project Group 1.DsnWrk</TreeLabel>
        </TreeRow>
        {treeRows.map((row, i) => (
          <TreeRow key={i} $depth={row.depth} $bold={row.bold} $project={row.project}>
            <TreeArrow>{row.open === true && <ExpandedIcon />}{row.open === false && <CollapsedIcon />}</TreeArrow>
            <TreeIcon>{row.icon}</TreeIcon>
            <TreeLabel $project={row.project} $selected={row.selected}>
              {row.label}
              {row.page && <PageIcon modified={row.modified} />}
            </TreeLabel>
          </TreeRow>
        ))}
      </Tree>
    </TreeBox>
  </Panel>
);

const EditorView = () => (
  <EditorColumn>
    <Editor>
      <BoardDrawing />
      <HeadsUp>
        <Coordinates>
          <span>x:</span><span>-50.000</span><span>dx:</span><span>49950.000 mil</span>
          <span>y:</span><span>265.000</span><span>dy:</span><span>50265.000 mil</span>
        </Coordinates>
        <ActiveLayer>Top Layer</ActiveLayer>
        <div>Snap: 5mil Hotspot Snap: 8mil</div>
      </HeadsUp>
      <ActiveBar>
        {tools.map((tool, i) => (
          <React.Fragment key={tool.name}>
            {i === 5 && <ToolSeparator />}
            <ActiveBarButton $menu={tool.menu} aria-label={tool.name}>
              {tool.glyph ? <BigA>A</BigA> : <Icon>{tool.icon}</Icon>}
            </ActiveBarButton>
          </React.Fragment>
        ))}
      </ActiveBar>
    </Editor>
    <LayerBar>
      <LayerSet>LS</LayerSet>
      <LayerArrows>
        <button aria-label="Previous layer"><Icon width={5} height={9} box="0 0 5 9"><path d="M5 0L0 4.500L5 9Z" fill="#8c8c8c" /></Icon></button>
        <button aria-label="Next layer"><Icon width={6} height={10} box="0 0 5 9"><path d="M0 0L5 4.500L0 9Z" fill="#ffffff" /></Icon></button>
      </LayerArrows>
      {layers.map((layer) => (
        <LayerTab key={layer.label} $active={layer.active}>
          <Swatch $color={layer.color} />
          {layer.label}
        </LayerTab>
      ))}
    </LayerBar>
  </EditorColumn>
);

const PcbLibraryPanel = () => (
  <LibraryPanel $width="368px">
    <PanelHeader $active>
      <h2>PCB Library</h2>
      <IconButton aria-label="Menu"><CaretIcon width={7} height={6} /></IconButton>
      <IconButton aria-label="Pin"><PinIcon side /></IconButton>
      <IconButton aria-label="Close"><CloseIcon /></IconButton>
    </PanelHeader>
    <LibraryBody>
      <MaskRow>
        <label htmlFor="mask">Mask</label>
        <SelectWrap $dark>
          <select id="mask"><option></option></select>
          <CaretIcon />
        </SelectWrap>
      </MaskRow>
      <ButtonRow $columns="160fr 80fr 79fr" $gap={11} $padding="0 0 10px">
        <Button>Apply</Button>
        <Button>Clear</Button>
        <Button>Magnify</Button>
      </ButtonRow>
      <div>
        <SelectWrap>
          <select aria-label="Highlight mode"><option>Normal</option></select>
          <CaretIcon />
        </SelectWrap>
      </div>
      <CheckRow>
        {['Select', 'Zoom', 'Clear Existing'].map((label) => (
          <CheckLabel key={label}>
            <input type="checkbox" defaultChecked />
            <Icon width={11} height={9} box="0 0 11 9"><path d="M1 4L4 7.500L10 1" stroke="#e8e8e8" strokeWidth="1.300" /></Icon>
            {label}
          </CheckLabel>
        ))}
      </CheckRow>
      <GroupTitle>Footprints</GroupTitle>
      <GridFrame $height="176px">
        <Grid>
          <colgroup>
            <col /><col width="76" /><col width="76" />
          </colgroup>
          <thead>
            <tr><th>Name<CaretUpIcon color="#232323" /></th><th>Pads</th><th>Primitives</th></tr>
          </thead>
          <tbody>
            {footprints.map(([name, pads, primitives], i) => (
              <GridRow key={name} $selected={i === 0}>
                <td><NameCell><FootprintIcon />{name}</NameCell></td>
                <td>{pads}</td>
                <td>{primitives}</td>
              </GridRow>
            ))}
          </tbody>
        </Grid>
        <Scroller />
      </GridFrame>
      <ButtonRow $columns="71fr 75fr 76fr 70fr" $gap={10} $padding="5px 9px 0 10px">
        <Button>Place</Button>
        <Button>Add</Button>
        <Button>Delete</Button>
        <Button>Edit</Button>
      </ButtonRow>
      <SectionTitle $margin="13px 0 8px"><ExpandedIcon />Footprint Primitives</SectionTitle>
      <Frame $padding="2px 0 6px">
        <GridFrame $height="210px">
          <Grid $spaced>
            <colgroup>
              <col width="64" /><col width="65" /><col width="64" /><col width="65" /><col />
            </colgroup>
            <thead>
              <tr><th>Type</th><th>Na...<CaretUpIcon color="#232323" /></th><th>X-Size</th><th>Y-Size</th><th>Layer</th></tr>
            </thead>
            <tbody>
              {tracks.map((id) => (
                <GridRow key={id}><td>Track</td><td /><td>7.87...</td><td /><td>Top...</td></GridRow>
              ))}
            </tbody>
          </Grid>
          <Scroller />
        </GridFrame>
      </Frame>
      <SectionTitle $margin="9px 0 8px"><ExpandedIcon />Other</SectionTitle>
      <Frame $padding="5px 0">
        <Preview><PreviewDrawing /></Preview>
      </Frame>
    </LibraryBody>
  </LibraryPanel>
);

const App = () => (
  <Window>
    <GlobalStyle />
    <TitleBar>
      <QuickAccess>
        <LogoIcon />
        <IconButton aria-label="Save"><SaveIcon /></IconButton>
        <IconButton aria-label="Save all"><SaveAllIcon /></IconButton>
        <IconButton aria-label="Open"><OpenIcon /></IconButton>
        <IconButton aria-label="Open project"><OpenIcon doc /></IconButton>
        <IconButton aria-label="Undo"><ArrowBackIcon /></IconButton>
        <IconButton aria-label="Redo"><ArrowBackIcon flip /></IconButton>
      </QuickAccess>
      <Title>STC89C52.PrjPcb - Altium Designer (20.0.1)</Title>
      <TitleRight>
        <SearchLabel $width="150px" $height="24px">
          <SearchIcon />
          <input type="text" placeholder="Search" aria-label="Search" />
        </SearchLabel>
        <WindowButton aria-label="Minimize"><Icon width={8} height={10} box="0 0 8 10"><path d="M0 9H8" stroke="#ffffff" strokeWidth="2" /></Icon></WindowButton>
        <WindowButton aria-label="Restore">
          <Icon width={12} height={11} box="0 0 12 11">
            <path d="M3.500 4V0.500H11.500V7H9M3 1.500H12" stroke="#ffffff" />
            <path d="M0.500 4.500H8.500V10.500H0.500ZM0 5.500H9" stroke="#ffffff" />
          </Icon>
        </WindowButton>
        <WindowButton $close aria-label="Close"><CloseIcon size={10} stroke={1.8} /></WindowButton>
      </TitleRight>
    </TitleBar>
    <MenuBar>
      {menus.map(([before, key, after]) => (
        <MenuButton key={key + after}>{before}<u>{key}</u>{after}</MenuButton>
      ))}
      <MenuIcons>
        <IconButton aria-label="Preferences"><MdSettings size={14} /></IconButton>
        <IconButton aria-label="Notifications"><MdNotifications size={14} /></IconButton>
        <AccountButton aria-label="Account">
          <MdAccountCircle size={17} />
          <CaretIcon width={8} height={4} color="#d8d8d8" />
        </AccountButton>
      </MenuIcons>
    </MenuBar>
    <Main>
      <ProjectsPanel />
      <Workspace>
        <DocumentTabs>
          {documents.map((doc) => (
            <DocumentTab key={doc.label} $active={doc.active}>{doc.icon}{doc.label}</DocumentTab>
          ))}
        </DocumentTabs>
        <WorkArea>
          <EditorView />
          <PcbLibraryPanel />
        </WorkArea>
      </Workspace>
      <Rail>
        <RailButton>Messages</RailButton>
        <RailButton>Properties</RailButton>
        <RailButton>PCB Library</RailButton>
        <RailMarker />
      </Rail>
    </Main>
    <StatusBar>
      <StatusGroup $width="482px">
        <StatusText $width="124px">X:-50mil Y:265mil</StatusText>
        <StatusText $width="87px">Grid: 5mil</StatusText>
        <StatusText>(Hotspot Snap)</StatusText>
      </StatusGroup>
      <StatusGroup $width="486px" />
      <PanelsButton>Panels</PanelsButton>
      <Watermark>https://blog.csdn.net/as480133937</Watermark>
    </StatusBar>
    <TaskStrip />
  </Window>
);

export default App;
